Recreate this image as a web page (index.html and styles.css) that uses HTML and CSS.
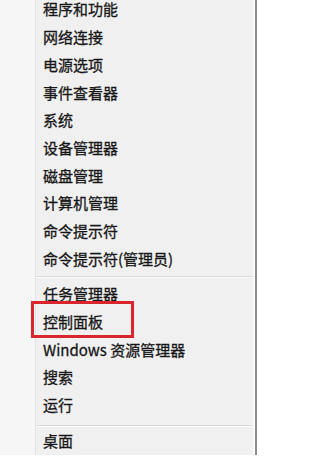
FILE: index.html
```html
<!DOCTYPE html>
<html lang="zh-CN">
<head>
<meta charset="utf-8">
<title>Win+X 菜单</title>
<link rel="stylesheet" href="styles.css">
</head>
<body>
<div class="screen">
  <div class="gutter"></div>
  <div class="menu">
    <div class="group first">
      <div class="item">程序和功能</div>
      <div class="item">网络连接</div>
      <div class="item">电源选项</div>
      <div class="item">事件查看器</div>
      <div class="item">系统</div>
      <div class="item">设备管理器</div>
      <div class="item">磁盘管理</div>
      <div class="item">计算机管理</div>
      <div class="item">命令提示符</div>
      <div class="item">命令提示符(管理员)</div>
    </div>
    <div class="sep"></div>
    <div class="group">
      <div class="item">任务管理器</div>
      <div class="item marked">控制面板<span class="mark"></span></div>
      <div class="item">Windows 资源管理器</div>
      <div class="item">搜索</div>
      <div class="item">运行</div>
    </div>
    <div class="sep sep2"></div>
    <div class="group">
      <div class="item">桌面</div>
    </div>
  </div>
</div>
</body>
</html>
```
FILE: styles.css
```css
html, body {
  margin: 0;
  padding: 0;
  background: #ffffff;
}
body {
  width: 259px;
  height: 460px;
  overflow: hidden;
  font-family: "Noto Sans CJK SC", "Noto Sans", sans-serif;
}
.screen {
  display: flex;
  height: 455px;
  overflow: hidden;
}
.gutter {
  width: 35px;
  flex: none;
  background: #f6f6f6;
}
.menu {
  width: 219px;
  flex: none;
  background: #f0f0f0;
  border-left: 1px solid #e3e3e3;
  border-right: 2px solid #8c8c8c;
  box-shadow: inset -2px 0 0 #fbfbfb;
  display: flex;
  flex-direction: column;
}
.group.first {
  margin-top: -4.55px;
}
.item {
  position: relative;
  height: 27.7px;
  line-height: 27.7px;
  padding-left: 7px;
  font-size: 15px;
  color: #161616;
  -webkit-text-stroke: 0.3px #161616;
  white-space: nowrap;
}
.sep {
  height: 9px;
  box-sizing: border-box;
  padding-top: 4px;
  margin-right: 2px;
}
.sep::before {
  content: "";
  display: block;
  height: 1px;
  background: #dadada;
  box-shadow: 0 1px 0 #fcfcfc;
}
.sep2 {
  padding-top: 6px;
}
.mark {
  position: absolute;
  left: -5px;
  top: -7px;
  width: 97px;
  height: 31px;
  border: 3px solid #d8262c;
  pointer-events: none;
}
```
